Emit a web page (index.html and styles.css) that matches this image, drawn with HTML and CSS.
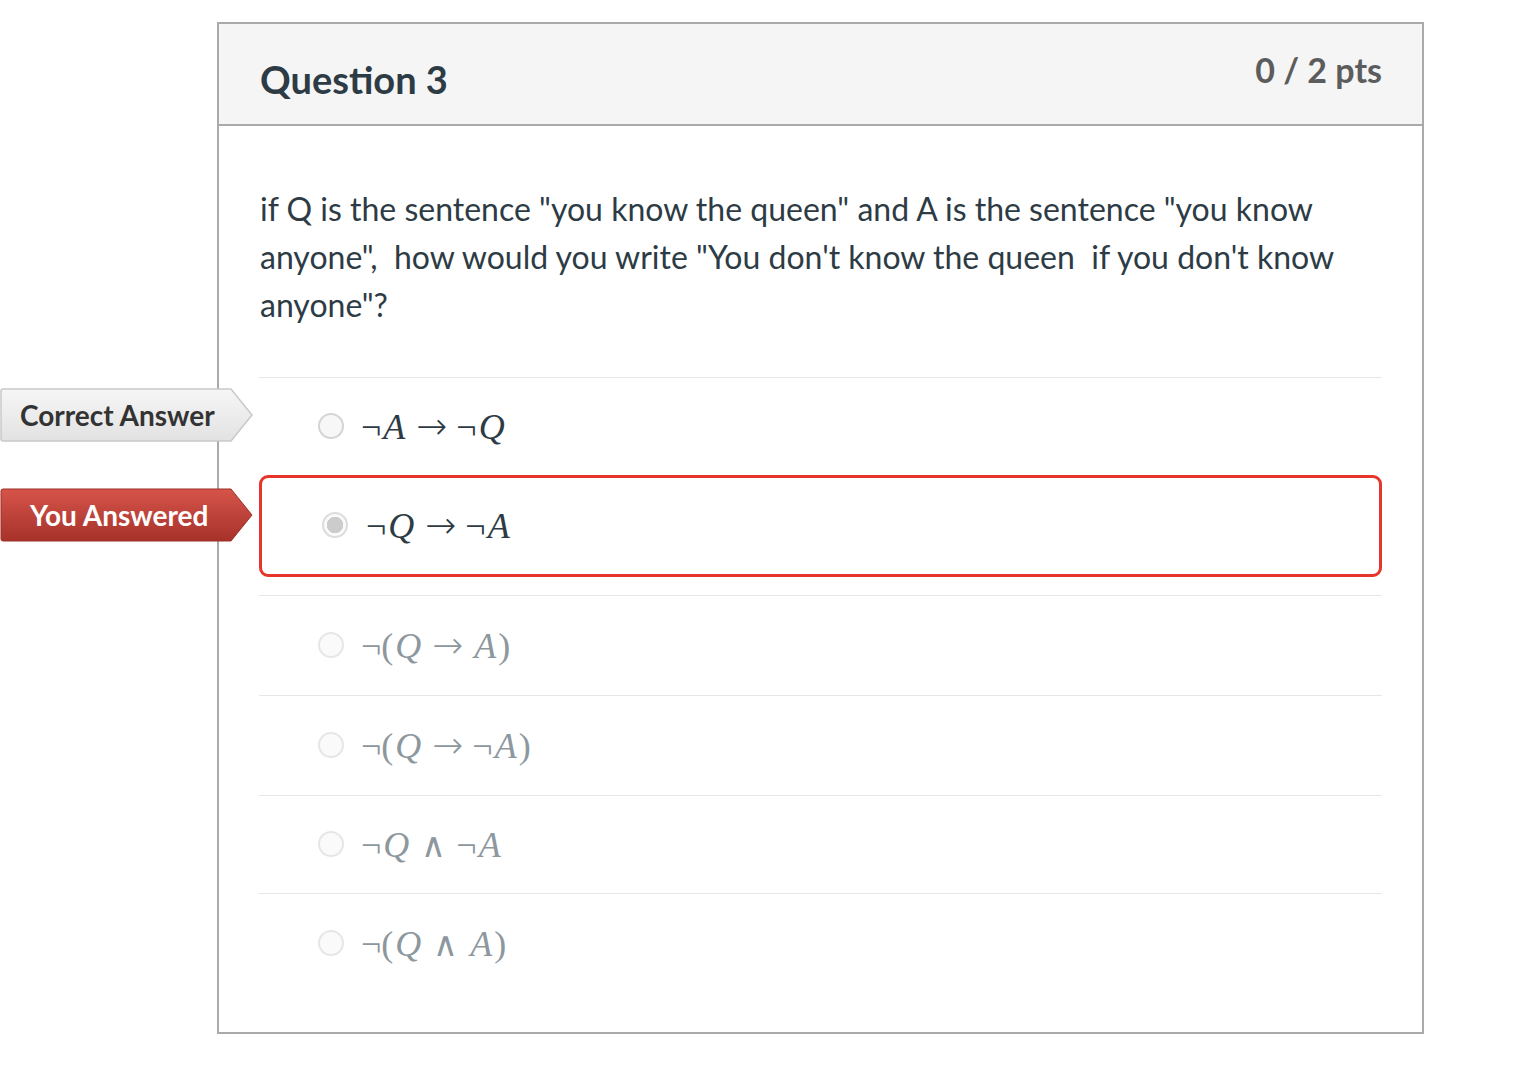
FILE: index.html
```html
<!DOCTYPE html>
<html>
<head>
<meta charset="utf-8">
<link rel="stylesheet" href="styles.css">
</head>
<body>
<div class="card">
  <div class="card-header">
    <h2 class="title">Question 3</h2>
    <div class="pts">0 / 2 pts</div>
  </div>
  <div class="card-body">
    <p class="question">if Q is the sentence "you know the queen" and A is the sentence "you know anyone",&nbsp; how would you write "You don't know the queen&nbsp; if you don't know anyone"?</p>
    <div class="answers">
      <div class="answer first">
        <div class="tag tag-correct">
          <svg class="tag-shape" width="254" height="54" viewBox="0 0 254 54">
            <defs>
              <linearGradient id="gc" x1="0" y1="0" x2="0" y2="1">
                <stop offset="0" stop-color="#f6f6f6"/>
                <stop offset="1" stop-color="#e2e2e2"/>
              </linearGradient>
            </defs>
            <path d="M3 1 H231 L252 27 L231 53 H3 Q1 53 1 51 V3 Q1 1 3 1 Z" fill="url(#gc)" stroke="#c9c9c9" stroke-width="1.5"/>
          </svg>
          <span class="tag-text">Correct Answer</span>
        </div>
        <span class="radio"></span>
        <span class="math"><span class="op">¬</span><i>A</i><span class="arr">→</span><span class="op">¬</span><i>Q</i></span>
      </div>
      <div class="answer selected">
        <div class="tag tag-wrong">
          <svg class="tag-shape" width="254" height="54" viewBox="0 0 254 54">
            <defs>
              <linearGradient id="gw" x1="0" y1="0" x2="0" y2="1">
                <stop offset="0" stop-color="#d6544a"/>
                <stop offset="1" stop-color="#a6322a"/>
              </linearGradient>
            </defs>
            <path d="M3 1 H231 L252 27 L231 53 H3 Q1 53 1 51 V3 Q1 1 3 1 Z" fill="url(#gw)" stroke="#9e2f27" stroke-width="1"/>
          </svg>
          <span class="tag-text">You Answered</span>
        </div>
        <span class="radio checked"></span>
        <span class="math"><span class="op">¬</span><i>Q</i><span class="arr">→</span><span class="op">¬</span><i>A</i></span>
      </div>
      <div class="answer faded">
        <span class="radio"></span>
        <span class="math"><span class="op">¬</span><span class="op">(</span><i>Q</i><span class="arr">→</span><i>A</i><span class="op">)</span></span>
      </div>
      <div class="answer faded">
        <span class="radio"></span>
        <span class="math"><span class="op">¬</span><span class="op">(</span><i>Q</i><span class="arr">→</span><span class="op">¬</span><i>A</i><span class="op">)</span></span>
      </div>
      <div class="answer faded short">
        <span class="radio"></span>
        <span class="math"><span class="op">¬</span><i>Q</i><span class="and">∧</span><span class="op">¬</span><i>A</i></span>
      </div>
      <div class="answer faded">
        <span class="radio"></span>
        <span class="math"><span class="op">¬</span><span class="op">(</span><i>Q</i><span class="and">∧</span><i>A</i><span class="op">)</span></span>
      </div>
    </div>
  </div>
</div>
</body>
</html>
```
FILE: styles.css
```css
* { box-sizing: border-box; }
html, body { margin: 0; padding: 0; background: #fff; }
body {
  padding: 22px 0 0 217px;
  font-family: Lato, "Noto Sans", sans-serif;
  color: #2d3b45;
}
.card {
  width: 1207px;
  border: 2px solid #aaaaaa;
  background: #fff;
}
.card-header {
  background: #f5f5f5;
  border-bottom: 2px solid #aaaaaa;
  height: 102px;
  padding: 0 40px 0 41px;
  display: flex;
  justify-content: space-between;
  align-items: flex-start;
}
.title {
  margin: 31px 0 0;
  font-size: 38px;
  font-weight: 700;
  line-height: 48px;
  color: #2d3b45;
}
.pts {
  margin-top: 22px;
  font-size: 34px;
  font-weight: 700;
  line-height: 48px;
  color: #5c5c5c;
}
.card-body {
  padding: 59px 40px 39px 40px;
}
.question {
  margin: 0 0 48px 1px;
  font-size: 32px;
  line-height: 48px;
  color: #2d3b45;
}
.answers {
  border-top: 1px solid #e6e6e6;
}
.answer {
  position: relative;
  display: flex;
  align-items: center;
  height: 100px;
  padding-left: 59px;
  border-top: 1px solid #e6e6e6;
}
.answer.first { border-top: none; height: 97px; }
.answer.short { height: 98px; }
.answer.selected {
  border: 3px solid #e6352a;
  border-radius: 9px;
  height: 102px;
  margin-bottom: 18px;
  padding-left: 60px;
}
.radio {
  width: 26px;
  height: 26px;
  border-radius: 50%;
  border: 2px solid #d4d4d4;
  background: #f7f7f7;
  flex: none;
  margin-right: 17px;
  margin-top: -2px;
}
.radio.checked {
  border-color: #dcdcdc;
  background: radial-gradient(circle, #cccccc 0 8px, #fafafa 8.5px);
  margin-right: 18px;
}
.faded .radio { border-color: #e6e6e6; background: #fafafa; }
.math {
  font-family: "Liberation Serif", "DejaVu Serif", serif;
  font-size: 36px;
  line-height: 44px;
  color: #2d3b45;
  white-space: nowrap;
  display: flex;
  align-items: baseline;
}
.math i { font-style: italic; padding: 0 2px 0 2px; }
.math .op { font-style: normal; }
.math .arr {
  font-family: "DejaVu Sans", sans-serif;
  font-weight: 200;
  font-size: 37px;
  margin: 0 9px 0 9px;
}
.math .and {
  font-family: "DejaVu Sans", sans-serif;
  font-weight: 200;
  font-size: 34px;
  margin: 0 10px;
}
.faded .math { color: #8d979e; }
.tag {
  position: absolute;
  left: -259px;
  width: 254px;
  height: 54px;
  display: flex;
  align-items: center;
}
.tag-correct { top: 10px; }
.tag-wrong { top: 10px; left: -262px; }
.tag-shape { position: absolute; left: 0; top: 0; }
.tag-text {
  position: relative;
  font-family: Lato, "Noto Sans", sans-serif;
  font-weight: 700;
  font-size: 28px;
  padding-left: 20px;
}
.tag-correct .tag-text { color: #333; }
.tag-wrong .tag-text { color: #fff; padding-left: 30px; }
```
